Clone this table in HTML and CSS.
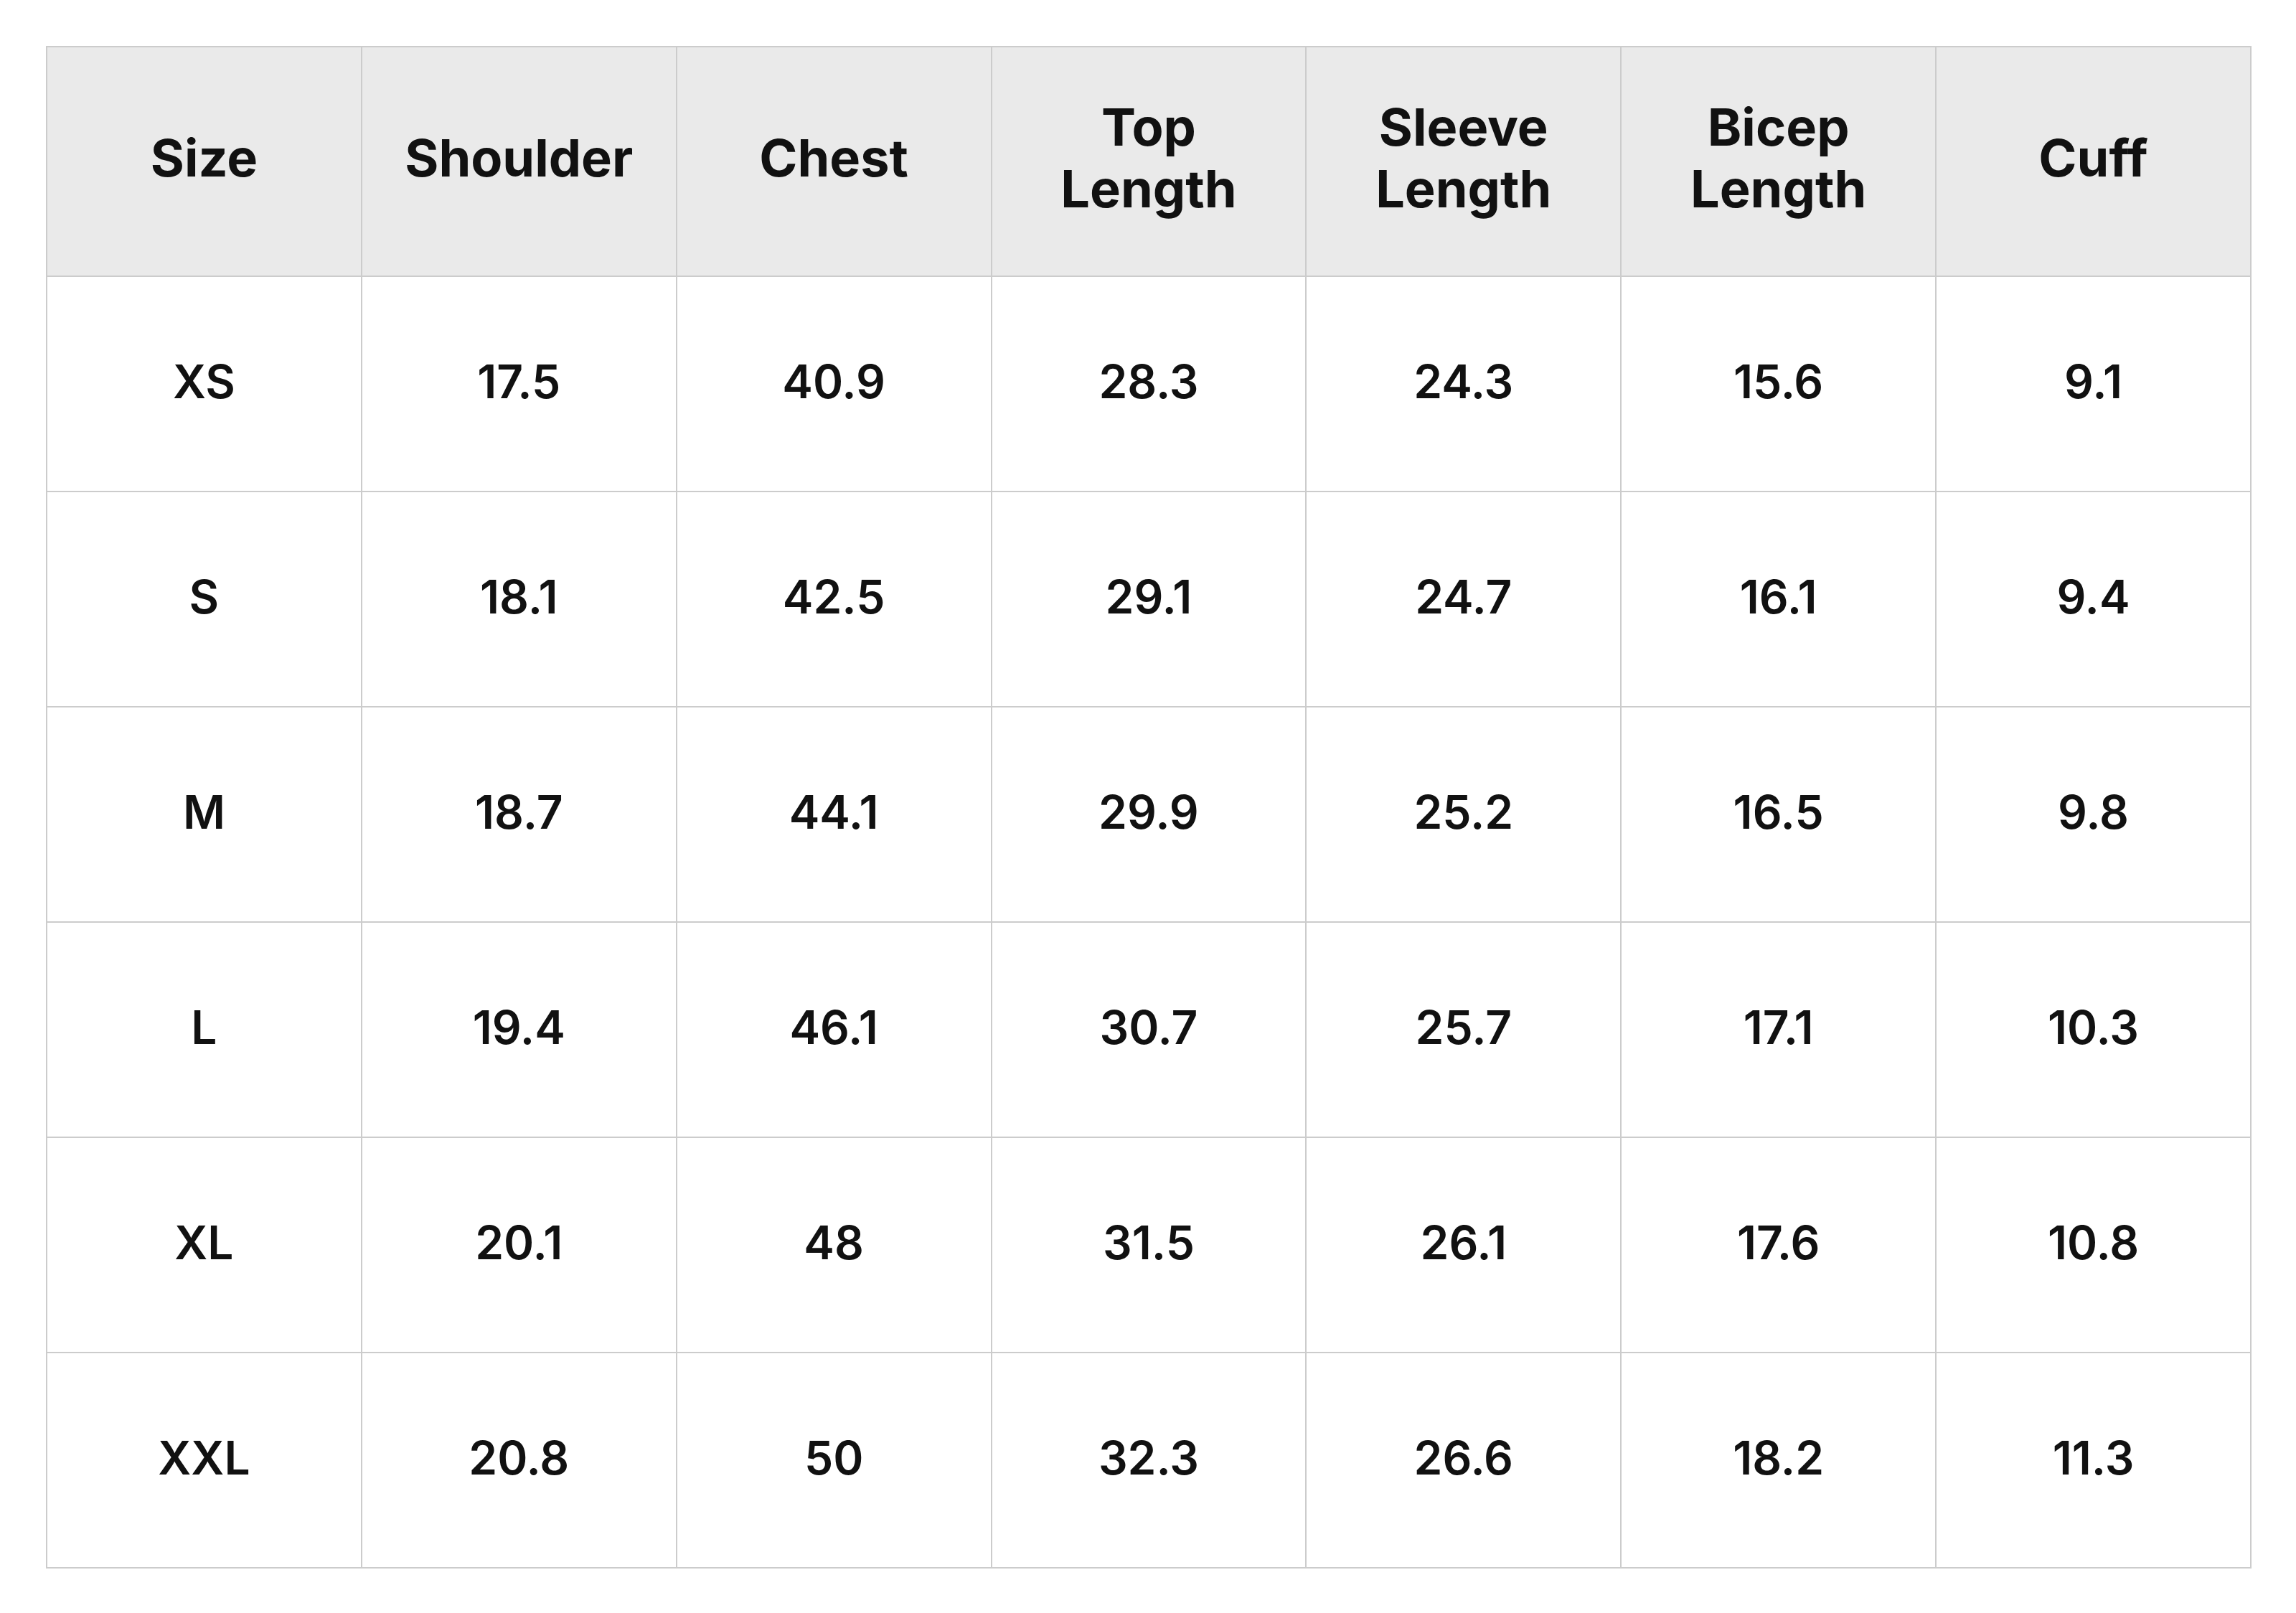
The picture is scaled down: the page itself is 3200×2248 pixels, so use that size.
FILE: index.html
```html
<!DOCTYPE html>
<html>
<head>
<meta charset="utf-8">
<link rel="stylesheet" href="styles.css">
</head>
<body>
<table class="size-table">
  <thead>
    <tr>
      <th>Size</th><th>Shoulder</th><th>Chest</th><th>Top Length</th><th>Sleeve Length</th><th>Bicep Length</th><th>Cuff</th>
    </tr>
  </thead>
  <tbody>
    <tr><td>XS</td><td>17.5</td><td>40.9</td><td>28.3</td><td>24.3</td><td>15.6</td><td>9.1</td></tr>
    <tr><td>S</td><td>18.1</td><td>42.5</td><td>29.1</td><td>24.7</td><td>16.1</td><td>9.4</td></tr>
    <tr><td>M</td><td>18.7</td><td>44.1</td><td>29.9</td><td>25.2</td><td>16.5</td><td>9.8</td></tr>
    <tr><td>L</td><td>19.4</td><td>46.1</td><td>30.7</td><td>25.7</td><td>17.1</td><td>10.3</td></tr>
    <tr><td>XL</td><td>20.1</td><td>48</td><td>31.5</td><td>26.1</td><td>17.6</td><td>10.8</td></tr>
    <tr><td>XXL</td><td>20.8</td><td>50</td><td>32.3</td><td>26.6</td><td>18.2</td><td>11.3</td></tr>
  </tbody>
</table>
</body>
</html>
```
FILE: styles.css
```css
html, body {
  margin: 0;
  padding: 0;
  background: #ffffff;
}
body {
  padding: 64px;
  font-family: Inter, "Noto Sans", sans-serif;
  color: #111111;
}
.size-table {
  border-collapse: collapse;
  table-layout: fixed;
  width: 3074px;
}
.size-table th,
.size-table td {
  border: 2px solid #cccccc;
  text-align: center;
  vertical-align: middle;
  padding: 0 32px;
}
.size-table th {
  background: #eaeaea;
  height: 308px;
  padding-bottom: 10px;
  font-size: 72px;
  font-weight: 700;
  line-height: 86px;
}
.size-table td {
  height: 292px;
  padding-bottom: 6px;
  font-size: 64px;
  font-weight: 600;
  line-height: 76px;
}
```
